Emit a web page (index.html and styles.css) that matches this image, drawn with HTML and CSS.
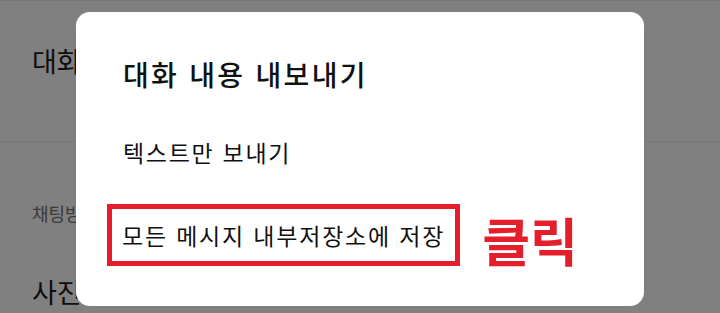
FILE: index.html
```html
<!DOCTYPE html>
<html lang="ko">
<head>
  <meta charset="UTF-8" />
  <meta name="viewport" content="width=device-width, initial-scale=1.0" />
  <title>대화 내용 내보내기</title>
  <link rel="stylesheet" href="styles.css">
</head>
<body>
  <div class="screen">
    <div class="settings">
      <div class="setting-row first">대화</div>
      <div class="divider"></div>
      <div class="section-label">채팅방</div>
      <div class="setting-row">사진 묶어보내기</div>
    </div>

    <div class="dialog">
      <h2 class="dialog-title">대화 내용 내보내기</h2>
      <div class="option">텍스트만 보내기</div>
      <div class="option-line">
        <div class="option highlight">모든 메시지 내부저장소에 저장</div>
        <span class="click-note">클릭</span>
      </div>
    </div>
  </div>
</body>
</html>
```

FILE: styles.css
```css
body {
  margin: 0;
  font-family: "Noto Sans CJK KR", "Noto Sans", sans-serif;
  background-color: #808080;
}
.screen {
  position: relative;
  width: 720px;
  height: 313px;
  overflow: hidden;
}
.settings {
  padding-top: 12px;
  border-top: 1px solid #787878;
}
.setting-row {
  padding: 0 32px;
  font-size: 27px;
  color: #0e0e0e;
  line-height: 40px;
  white-space: nowrap;
}
.setting-row.first {
  padding-top: 28px;
  padding-bottom: 60px;
}
.divider {
  height: 1px;
  background: #767676;
}
.section-label {
  padding: 58px 32px 0;
  font-size: 18px;
  color: #3a3a3a;
  line-height: 26px;
}
.setting-row:last-child {
  padding-top: 46px;
}

.dialog {
  position: absolute;
  left: 76px;
  top: 12px;
  width: 568px;
  height: 294px;
  box-sizing: border-box;
  padding: 42px 0 0 47px;
  background: white;
  border-radius: 14px;
}
.dialog-title {
  margin: 0;
  font-size: 28px;
  font-weight: 500;
  color: #111;
  line-height: 40px;
  letter-spacing: 2.3px;
}
.option {
  margin-top: 42px;
  font-size: 23px;
  color: #111;
  line-height: 32px;
  letter-spacing: 1.7px;
}
.option-line {
  display: flex;
  align-items: center;
  margin-top: 34px;
  margin-left: -16px;
}
.option.highlight {
  margin-top: 0;
  padding: 10px;
  border: 5px solid #e41e2b;
  letter-spacing: 1.8px;
}
.click-note {
  margin-left: 22px;
  margin-top: 10px;
  font-size: 52px;
  font-weight: 700;
  color: #e41e2b;
  line-height: 56px;
}
```
